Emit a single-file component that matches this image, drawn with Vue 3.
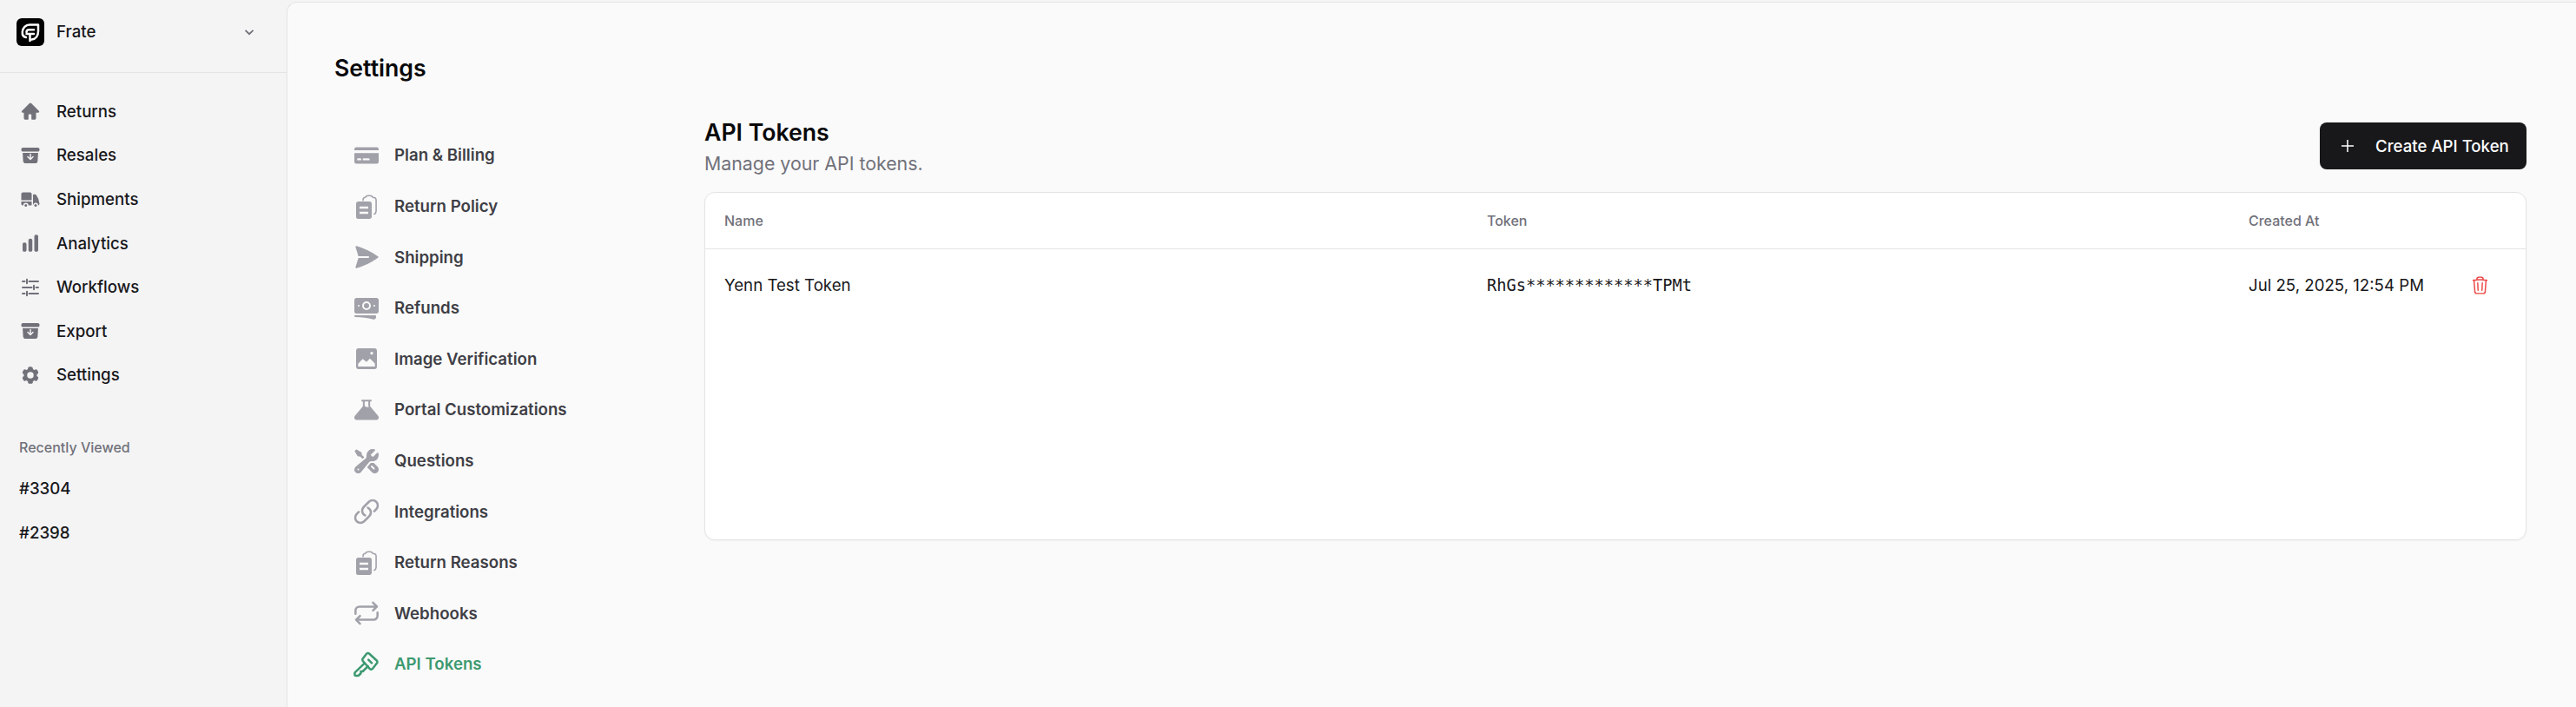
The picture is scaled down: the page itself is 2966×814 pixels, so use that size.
<script setup>
const P = {
  home: ['M13.100 3.100a1.550 1.550 0 0 0-2.200 0L2.200 11.800c-.7.700-.2 1.900.8 1.900h1.500v6.300c0 1 .8 1.800 1.800 1.800h2.500c.6 0 1-.4 1-1v-4.300c0-.6.400-1 1-1h1.400c.6 0 1 .4 1 1v4.300c0 .6.400 1 1 1h2.500c1 0 1.800-.8 1.800-1.800v-6.300H21c1 0 1.500-1.200.8-1.900L13.100 3.100Z'],
  archive: ['M3.375 3C2.339 3 1.5 3.84 1.5 4.875v.75c0 1.036.84 1.875 1.875 1.875h17.25c1.035 0 1.875-.84 1.875-1.875v-.75C22.5 3.839 21.66 3 20.625 3H3.375Z', 'M3.087 9l.54 9.176A3 3 0 0 0 6.62 21h10.757a3 3 0 0 0 2.995-2.824L20.913 9H3.087Zm9.663 1.5v4.19l1.72-1.72a.75.75 0 1 1 1.06 1.06l-3 3a.75.75 0 0 1-1.06 0l-3-3a.75.75 0 1 1 1.06-1.06l1.72 1.72V10.5a.75.75 0 0 1 1.5 0Z'],
  truck: ['M3.375 4.5C2.339 4.5 1.5 5.34 1.5 6.375V13.5h12V6.375c0-1.036-.84-1.875-1.875-1.875h-8.25ZM13.5 15h-12v2.625c0 1.035.84 1.875 1.875 1.875h.375a3 3 0 1 1 6 0h3a.75.75 0 0 0 .75-.75V15Z', 'M8.25 19.5a1.5 1.5 0 1 0-3 0 1.5 1.5 0 0 0 3 0ZM15.75 6.75a.75.75 0 0 0-.75.75v11.25c0 .087.015.17.042.248a3 3 0 0 1 5.958.464c.853-.175 1.522-.935 1.464-1.883a18.659 18.659 0 0 0-3.732-10.104 1.837 1.837 0 0 0-1.47-.725H15.75Z', 'M19.5 19.5a1.5 1.5 0 1 0-3 0 1.5 1.5 0 0 0 3 0Z'],
  chart: ['M18.375 2.25c-1.035 0-1.875.84-1.875 1.875v15.75c0 1.035.84 1.875 1.875 1.875h.75c1.035 0 1.875-.84 1.875-1.875V4.125c0-1.036-.84-1.875-1.875-1.875h-.75ZM9.75 8.625c0-1.036.84-1.875 1.875-1.875h.75c1.036 0 1.875.84 1.875 1.875v11.25c0 1.035-.84 1.875-1.875 1.875h-.75a1.875 1.875 0 0 1-1.875-1.875V8.625ZM3 13.125c0-1.036.84-1.875 1.875-1.875h.75c1.036 0 1.875.84 1.875 1.875v6.75c0 1.035-.84 1.875-1.875 1.875h-.75A1.875 1.875 0 0 1 3 19.875v-6.75Z'],
  cog: ['M11.078 2.25c-.917 0-1.699.663-1.85 1.567L9.05 4.889c-.02.12-.115.26-.297.348a7.493 7.493 0 0 0-.986.57c-.166.115-.334.126-.45.083L6.3 5.508a1.875 1.875 0 0 0-2.282.819l-.922 1.597a1.875 1.875 0 0 0 .432 2.385l.84.692c.095.078.17.229.154.43a7.598 7.598 0 0 0 0 1.139c.015.2-.059.352-.153.43l-.841.692a1.875 1.875 0 0 0-.432 2.385l.922 1.597a1.875 1.875 0 0 0 2.282.818l1.019-.382c.115-.043.283-.031.45.082.312.214.641.405.985.57.182.088.277.228.297.35l.178 1.071c.151.904.933 1.567 1.85 1.567h1.844c.916 0 1.699-.663 1.85-1.567l.178-1.072c.02-.12.114-.26.297-.349.344-.165.673-.356.985-.57.167-.114.335-.125.45-.082l1.02.382a1.875 1.875 0 0 0 2.28-.819l.923-1.597a1.875 1.875 0 0 0-.432-2.385l-.84-.692c-.095-.078-.17-.229-.154-.43a7.614 7.614 0 0 0 0-1.139c-.016-.2.059-.352.153-.43l.84-.692c.708-.582.891-1.59.433-2.385l-.922-1.597a1.875 1.875 0 0 0-2.282-.818l-1.02.382c-.114.043-.282.031-.449-.083a7.49 7.49 0 0 0-.985-.57c-.183-.087-.277-.227-.297-.348l-.179-1.072a1.875 1.875 0 0 0-1.85-1.567h-1.843ZM12 15.75a3.75 3.75 0 1 0 0-7.5 3.75 3.75 0 0 0 0 7.5Z'],
  card: ['M3.300 4.800A1.800 1.800 0 0 0 1.500 6.600v.9h21v-.9a1.800 1.800 0 0 0-1.800-1.800H3.300ZM22.500 9.900h-21v7.500a1.800 1.800 0 0 0 1.800 1.800h17.400a1.800 1.800 0 0 0 1.800-1.800V9.900ZM3.900 15.300a.9.9 0 0 1 .9-.9h1.800a.9.9 0 0 1 0 1.800H4.800a.9.9 0 0 1-.9-.9Zm5.700-.9a.9.9 0 0 0 0 1.800h4.200a.9.9 0 0 0 0-1.800H9.600Z'],
  clip: ['M3 9.375C3 8.339 3.84 7.5 4.875 7.5h9.75c1.036 0 1.875.84 1.875 1.875v11.25c0 1.035-.84 1.875-1.875 1.875h-9.75A1.875 1.875 0 0 1 3 20.625V9.375ZM6 11.750v2h7.500v-2H6Zm0 4.500v2h7.500v-2H6Z'],
  plane: ['M3.478 2.404a.75.75 0 0 0-.926.941l2.432 7.905H13.5a.75.75 0 0 1 0 1.5H4.984l-2.432 7.905a.75.75 0 0 0 .926.94 60.519 60.519 0 0 0 18.445-8.986.75.75 0 0 0 0-1.218A60.517 60.517 0 0 0 3.478 2.404Z'],
  notes: ['M12 7.5a2.25 2.25 0 1 0 0 4.5 2.25 2.25 0 0 0 0-4.5Z', 'M1.5 4.875C1.5 3.839 2.34 3 3.375 3h17.25c1.035 0 1.875.84 1.875 1.875v9.75c0 1.036-.84 1.875-1.875 1.875H3.375A1.875 1.875 0 0 1 1.5 14.625v-9.75ZM8.25 9.75a3.75 3.75 0 1 1 7.5 0 3.75 3.75 0 0 1-7.5 0ZM18.75 9a.75.75 0 0 0-.75.75v.008c0 .414.336.75.75.75h.008a.75.75 0 0 0 .75-.75V9.75a.75.75 0 0 0-.75-.75h-.008ZM4.5 9.75A.75.75 0 0 1 5.25 9h.008a.75.75 0 0 1 .75.75v.008a.75.75 0 0 1-.75.75H5.25a.75.75 0 0 1-.75-.75V9.75Z', 'M2.25 18a.75.75 0 0 0 0 1.5c5.4 0 10.63.722 15.6 2.075 1.19.324 2.4-.558 2.4-1.82V18.75a.75.75 0 0 0-.75-.75H2.25Z'],
  photo: ['M5.250 3h13.500A2.250 2.250 0 0 1 21 5.250v13.500A2.250 2.250 0 0 1 18.750 21H5.250A2.250 2.250 0 0 1 3 18.750V5.250A2.250 2.250 0 0 1 5.250 3Zm11.250 3a1.250 1.250 0 1 0 0 2.500 1.250 1.250 0 0 0 0-2.500ZM4.750 18.750v-2.500l4-4 3.200 2.600 3-3.100 4.300 4.400v2.600H4.750Z'],
  flask: ['M8 3.200h8c.6 0 .6 1.500 0 1.500h-.9v4.100l6.900 8.300c1.200 1.600.3 3.600-1.600 3.600H3.600c-1.900 0-2.800-2-1.600-3.600l6.900-8.300V4.700H8c-.6 0-.6-1.500 0-1.500Zm2.400 1.500v3.900l.6.4c1.200.7 2.200.6 3.100.3l-.5-.6V4.700h-3.200Z'],
  tools: ['M12 6.75a5.25 5.25 0 0 1 6.775-5.025.75.75 0 0 1 .313 1.248l-3.32 3.319c.063.475.276.934.641 1.299.365.365.824.578 1.3.64l3.318-3.319a.75.75 0 0 1 1.248.313 5.25 5.25 0 0 1-5.472 6.756c-1.018-.086-1.87.1-2.309.634L7.344 21.3A3.298 3.298 0 1 1 2.7 16.657l8.684-7.151c.533-.44.72-1.291.634-2.309A5.342 5.342 0 0 1 12 6.75ZM4.117 19.125a.75.75 0 0 1 .75-.75h.008a.75.75 0 0 1 .75.75v.008a.75.75 0 0 1-.75.75h-.008a.75.75 0 0 1-.75-.75v-.008Z', 'm10.076 8.64-2.201-2.2V4.874a.75.75 0 0 0-.364-.643l-3.75-2.25a.75.75 0 0 0-.916.113l-.75.75a.75.75 0 0 0-.113.916l2.25 3.75a.75.75 0 0 0 .643.364h1.564l2.062 2.062 1.575-1.297Z', 'm12.556 17.329 4.183 4.182a3.375 3.375 0 0 0 4.773-4.773l-3.306-3.305a6.803 6.803 0 0 1-1.53.043c-.394-.034-.682-.006-.867.042a.589.589 0 0 0-.167.063l-3.086 3.748Zm3.414-1.36a.75.75 0 0 1 1.06 0l1.875 1.876a.75.75 0 1 1-1.06 1.06L15.97 17.03a.75.75 0 0 1 0-1.06Z'],
}
const S = {
  tune: ['M3 5h2.500M8 2.800v4.400M10.500 5H21M3 12h10.500M16 9.800v4.400M18.500 12H21M3 19h2.500M8 16.800v4.400M10.500 19H21'],
  clipBack: ['M9 6.500V6c0-1.200.9-2 2-2.100C11.500 3 12.500 2.400 13.500 2.400H15c1 0 2 .6 2.500 1.500 1.600.1 2.800 1 2.800 2.300v9.600c0 1.200-.7 2.200-1.600 2.600'],
  link: ['M13.190 8.688a4.500 4.500 0 0 1 1.242 7.244l-4.500 4.500a4.500 4.500 0 0 1-6.364-6.364l1.757-1.757m13.350-.622 1.757-1.757a4.500 4.500 0 0 0-6.364-6.364l-4.500 4.500a4.500 4.500 0 0 0 1.242 7.244'],
  swap: ['M2.500 12.500V9.800A3.500 3.500 0 0 1 6 6.300h15m0 0-3.400-3.400M21 6.300l-3.400 3.400M21.500 11.500v2.700a3.500 3.500 0 0 1-3.500 3.500H3m0 0 3.400-3.400M3 17.700l3.400 3.400'],
  key: ['M12 2.800c.7-.8 1.800-.8 2.500 0l6.300 5.800c.7.7.7 1.800 0 2.500l-3.600 4.600c-.7.7-1.800.7-2.500 0L9 9.200c-.7-.7-.7-1.800 0-2.500l3-3.900Z', 'M10.300 11 2.300 18.600c-.3.300-.5.700-.5 1.100v1c0 .6.400 1 1 1h1.700c.4 0 .8-.2 1.100-.5l1.500-1.500v-1.700h1.700l4.400-4.400', 'M13.700 8l2.800 2.800'],
  trash: ['m14.74 9-.346 9m-4.788 0L9.26 9m9.968-3.21c.342.052.682.107 1.022.166m-1.022-.165L18.16 19.673a2.25 2.25 0 0 1-2.244 2.077H8.084a2.25 2.25 0 0 1-2.244-2.077L4.772 5.79m14.456 0a48.108 48.108 0 0 0-3.478-.397m-12 .562c.34-.059.68-.114 1.022-.165m0 0a48.11 48.11 0 0 1 3.478-.397m7.5 0v-.916c0-1.18-.91-2.164-2.09-2.201a51.964 51.964 0 0 0-3.32 0c-1.18.037-2.09 1.022-2.09 2.201v.916m7.5 0a48.667 48.667 0 0 0-7.5 0'],
}
const mainNav = [
  { label: 'Returns', fill: P.home },
  { label: 'Resales', fill: P.archive },
  { label: 'Shipments', fill: P.truck },
  { label: 'Analytics', fill: P.chart },
  { label: 'Workflows', stroke: S.tune },
  { label: 'Export', fill: P.archive },
  { label: 'Settings', fill: P.cog },
]
const settingsNav = [
  { label: 'Plan & Billing', fill: P.card },
  { label: 'Return Policy', fill: P.clip, stroke: S.clipBack },
  { label: 'Shipping', fill: P.plane },
  { label: 'Refunds', fill: P.notes },
  { label: 'Image Verification', fill: P.photo },
  { label: 'Portal Customizations', fill: P.flask },
  { label: 'Questions', fill: P.tools },
  { label: 'Integrations', stroke: S.link },
  { label: 'Return Reasons', fill: P.clip, stroke: S.clipBack },
  { label: 'Webhooks', stroke: S.swap },
  { label: 'API Tokens', stroke: S.key, active: true },
]
</script>

<template>
  <div class="app">
    <aside class="sidebar">
      <div class="org">
        <svg class="logo" viewBox="0 0 32 32">
          <rect width="32" height="32" rx="6" fill="#000" />
          <path d="M11 22C8 21.500 6.500 19 6.800 15.500 7.200 11 10.500 7.500 15 7.500h10v7.500c0 5-2.800 9-7.500 9.500M11.500 16c0-1.500 1.200-2.700 3-2.700H20M11.500 18h8.500M15.500 18v8" fill="none" stroke="#fff" stroke-width="2.500" stroke-linecap="round" stroke-linejoin="round" />
        </svg>
        <span class="org-name">Frate</span>
        <svg class="chev" viewBox="0 0 12 12"><path d="M1.500 3.800 6 8.200l4.500-4.400" fill="none" stroke="#71717a" stroke-width="1.800" /></svg>
      </div>
      <nav class="main-nav">
        <a v-for="item in mainNav" :key="item.label" class="main-item">
          <svg class="main-icon" viewBox="0 0 24 24">
            <path v-for="d in item.fill" :key="d" :d="d" fill="#71717a" fill-rule="evenodd" />
            <path v-for="d in item.stroke" :key="d" :d="d" fill="none" stroke="#71717a" stroke-width="2" stroke-linecap="round" />
          </svg>
          <span>{{ item.label }}</span>
        </a>
      </nav>
      <div class="recent">
        <div class="recent-title">Recently Viewed</div>
        <a class="recent-item">#3304</a>
        <a class="recent-item">#2398</a>
      </div>
    </aside>
    <main class="main">
      <h1 class="page-title">Settings</h1>
      <div class="columns">
        <nav class="settings-nav">
          <a v-for="item in settingsNav" :key="item.label" class="settings-item" :class="{ active: item.active }">
            <svg class="settings-icon" viewBox="0 0 24 24">
              <path v-for="d in item.fill" :key="d" :d="d" fill="currentColor" fill-rule="evenodd" />
              <path v-for="d in item.stroke" :key="d" :d="d" fill="none" stroke="currentColor" :stroke-width="item.fill ? 1.2 : 1.9" stroke-linecap="round" stroke-linejoin="round" />
            </svg>
            <span>{{ item.label }}</span>
          </a>
        </nav>
        <section class="panel">
          <header class="panel-head">
            <div>
              <h2 class="panel-title">API Tokens</h2>
              <p class="panel-sub">Manage your API tokens.</p>
            </div>
            <button class="create" type="button">
              <svg class="plus" viewBox="0 0 16 16"><path d="M8 1v14M1 8h14" fill="none" stroke="#fff" stroke-width="1.500" /></svg>
              <span>Create API Token</span>
            </button>
          </header>
          <div class="card">
            <div class="row head">
              <div class="cell">Name</div>
              <div class="cell">Token</div>
              <div class="cell">Created At</div>
            </div>
            <div class="row body">
              <div class="cell">Yenn Test Token</div>
              <div class="cell mono">RhGs*************TPMt</div>
              <div class="cell last">
                <span>Jul 25, 2025, 12:54 PM</span>
                <svg class="trash" viewBox="0 0 24 24"><path :d="S.trash[0]" fill="none" stroke="#ef4444" stroke-width="1.500" stroke-linecap="round" stroke-linejoin="round" /></svg>
              </div>
            </div>
          </div>
        </section>
      </div>
    </main>
  </div>
</template>

<style>
html, body { margin: 0; background: #f4f4f5; overflow: hidden; }
</style>

<style scoped>
.app {
  display: flex;
  height: 814px;
  overflow: hidden;
  font-family: Inter, "Liberation Sans", sans-serif;
  color: #18181b;
  background: #f4f4f5;
}
.sidebar { width: 330px; flex: none; }
.org {
  display: flex;
  align-items: center;
  height: 84px;
  padding: 0 37px 10px 19px;
  box-sizing: border-box;
  border-bottom: 1px solid #e4e4e7;
}
.logo { width: 32px; height: 32px; flex: none; }
.org-name { margin-left: 14px; flex: 1; font-size: 18.67px; font-weight: 500; }
.chev { width: 12px; height: 12px; }
.main-nav { padding-top: 19px; }
.main-item { display: flex; align-items: center; height: 50.6px; padding-left: 23px; gap: 18px; font-size: 18.67px; font-weight: 500; }
.main-icon { width: 24px; height: 24px; flex: none; }
.recent { padding: 46px 22px 0; }
.recent-title { height: 24px; line-height: 24px; font-size: 16px; font-weight: 500; color: #71717a; }
.recent-item { display: flex; align-items: center; height: 50.6px; font-size: 18.67px; font-weight: 500; }
.recent-title + .recent-item { margin-top: 10px; }
.main {
  flex: 1;
  min-width: 0;
  margin-top: 2px;
  padding: 59px 57px 0 54px;
  background: #fafafa;
  border-left: 1px solid #e4e4e7;
  border-top: 1px solid #e4e4e7;
  border-top-left-radius: 12px;
  box-sizing: border-box;
}
.page-title { margin: 0; font-size: 26.67px; line-height: 32px; font-weight: 600; color: #09090b; }
.columns { display: flex; margin-top: 43px; }
.settings-nav { width: 426px; flex: none; padding-top: 12.7px; }
.settings-item { display: flex; align-items: center; height: 58.6px; padding-left: 21px; gap: 16px; font-size: 18.67px; font-weight: 600; color: #3f3f46; }
.settings-item.active { color: #3d9970; }
.settings-icon { width: 32px; height: 32px; flex: none; color: #a1a1aa; }
.settings-item.active .settings-icon { color: #3d9970; }
.panel { flex: 1; min-width: 0; }
.panel-head { display: flex; justify-content: space-between; align-items: flex-start; }
.panel-title { margin: 0; font-size: 26.67px; line-height: 30px; font-weight: 600; color: #09090b; }
.panel-sub { margin: 8px 0 0; font-size: 21.33px; line-height: 26px; color: #71717a; }
.create {
  display: flex;
  align-items: center;
  gap: 24px;
  width: 238px;
  height: 54px;
  margin-top: 4px;
  padding: 0 0 0 24px;
  border: 0;
  border-radius: 8px;
  background: #18181b;
  color: #fff;
  font: 500 18.67px Inter, "Liberation Sans", sans-serif;
}
.plus { width: 16px; height: 16px; flex: none; }
.card {
  height: 401px;
  margin-top: 20px;
  box-sizing: border-box;
  background: #fff;
  border: 1px solid #e4e4e7;
  border-radius: 12px;
  box-shadow: 0 1px 2px rgba(0, 0, 0, 0.04);
}
.row { display: grid; grid-template-columns: 878px 877px 1fr; align-items: center; }
.cell { padding-left: 22px; }
.head { height: 64px; border-bottom: 1px solid #e4e4e7; font-size: 16px; font-weight: 500; color: #71717a; }
.body { height: 82px; font-size: 18.67px; color: #18181b; }
.mono { font-family: "DejaVu Sans Mono", monospace; font-size: 18.67px; }
.last { display: flex; align-items: center; justify-content: space-between; padding-right: 41px; }
.trash { width: 23px; height: 23px; flex: none; }
</style>
